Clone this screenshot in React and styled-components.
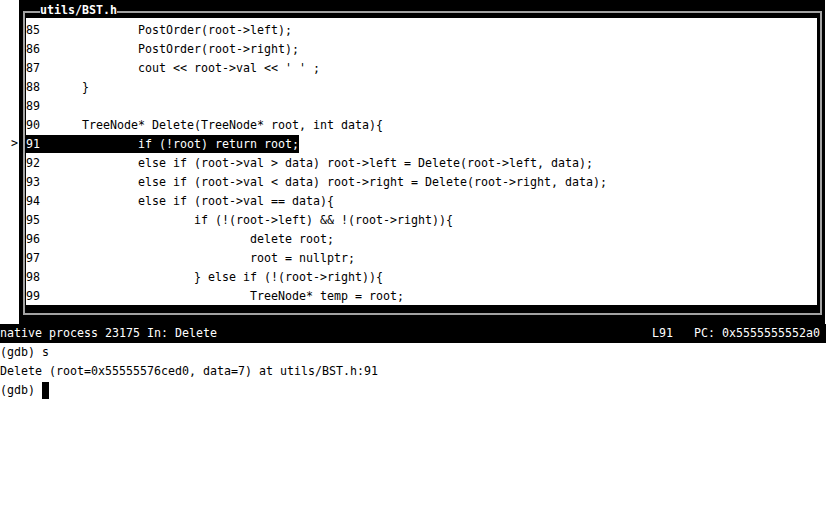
import React from "react";
import styled, { createGlobalStyle } from "styled-components";

const GlobalStyle = createGlobalStyle`
	html, body {
		margin: 0;
		padding: 0;
		background: #fff;
	}

	body {
		font-family: "DejaVu Sans Mono", "Liberation Mono", monospace;
		font-size: 11.63px;
		line-height: 19px;
		color: #000;
	}
`;

const Screen = styled.div`
	width: 830px;
	height: 510px;
	overflow: hidden;
`;

const SourceArea = styled.div`
	display: flex;
`;

const Gutter = styled.div`
	width: 19px;
	padding-top: 20px;
	display: flex;
	flex-direction: column;
`;

const Marker = styled.div`
	height: 19px;
	text-align: right;
	padding-right: 1px;
	white-space: pre;
`;

const Panel = styled.div`
	width: 806px;
	box-sizing: border-box;
	background: #000;
	padding: 1px 3px 9px 4px;
`;

const TitleBar = styled.div`
	display: flex;
	height: 17px;

	&::before,
	&::after {
		content: "";
		margin-top: 10px;
		border-top: 2px solid #a2a2a2;
	}

	&::before {
		width: 15px;
		border-left: 2px solid #a2a2a2;
	}

	&::after {
		flex: 1;
		border-right: 2px solid #a2a2a2;
	}
`;

const Title = styled.span`
	color: #fff;
	font-weight: bold;
	line-height: 19px;
	white-space: pre;
`;

const Frame = styled.div`
	border: 2px solid #a2a2a2;
	border-top: none;
	padding: 0 3px 8px 1px;
`;

const Body = styled.div`
	background: #fff;
	padding-top: 2px;
	height: 285px;
`;

const SourceLine = styled.div`
	height: 19px;
	display: flex;
	align-items: center;
	white-space: pre;

	span {
		display: inline-block;
		height: 18px;
		line-height: 19px;
		background: ${p => (p.current ? "#000" : "transparent")};
		color: ${p => (p.current ? "#fff" : "#000")};
	}
`;

const StatusBar = styled.div`
	width: 826px;
	height: 19px;
	background: #000;
	color: #fff;
	display: flex;
	justify-content: space-between;
	padding-right: 6px;
	box-sizing: border-box;
	white-space: pre;
`;

const Console = styled.div`
	display: flex;
	flex-direction: column;
`;

const ConsoleLine = styled.div`
	height: 19px;
	white-space: pre;
	display: flex;
	align-items: center;
`;

const Cursor = styled.span`
	display: inline-block;
	width: 7px;
	height: 17px;
	background: #000;
`;

const lines = [
	{ num: 85, indent: 2, code: "PostOrder(root->left);" },
	{ num: 86, indent: 2, code: "PostOrder(root->right);" },
	{ num: 87, indent: 2, code: "cout << root->val << ' ' ;" },
	{ num: 88, indent: 1, code: "}" },
	{ num: 89, indent: 0, code: "" },
	{ num: 90, indent: 1, code: "TreeNode* Delete(TreeNode* root, int data){" },
	{ num: 91, indent: 2, code: "if (!root) return root;", current: true },
	{ num: 92, indent: 2, code: "else if (root->val > data) root->left = Delete(root->left, data);" },
	{ num: 93, indent: 2, code: "else if (root->val < data) root->right = Delete(root->right, data);" },
	{ num: 94, indent: 2, code: "else if (root->val == data){" },
	{ num: 95, indent: 3, code: "if (!(root->left) && !(root->right)){" },
	{ num: 96, indent: 4, code: "delete root;" },
	{ num: 97, indent: 4, code: "root = nullptr;" },
	{ num: 98, indent: 3, code: "} else if (!(root->right)){" },
	{ num: 99, indent: 4, code: "TreeNode* temp = root;" }
];

const formatLine = ({ num, indent, code }) =>
	indent === 0
		? String(num)
		: String(num).padEnd(8) + " ".repeat(8 * (indent - 1)) + code;

const App = () => (
	<Screen>
		<GlobalStyle />
		<SourceArea>
			<Gutter>
				{lines.map(line => (
					<Marker key={line.num}>{line.current ? ">" : " "}</Marker>
				))}
			</Gutter>
			<Panel>
				<TitleBar>
					<Title>utils/BST.h</Title>
				</TitleBar>
				<Frame>
					<Body>
						{lines.map(line => (
							<SourceLine key={line.num} current={line.current}>
								<span>{formatLine(line)}</span>
							</SourceLine>
						))}
					</Body>
				</Frame>
			</Panel>
		</SourceArea>
		<StatusBar>
			<span>native process 23175 In: Delete</span>
			<span>L91   PC: 0x5555555552a0</span>
		</StatusBar>
		<Console>
			<ConsoleLine>(gdb) s</ConsoleLine>
			<ConsoleLine>Delete (root=0x55555576ced0, data=7) at utils/BST.h:91</ConsoleLine>
			<ConsoleLine>
				(gdb) <Cursor />
			</ConsoleLine>
		</Console>
	</Screen>
);

export default App;
